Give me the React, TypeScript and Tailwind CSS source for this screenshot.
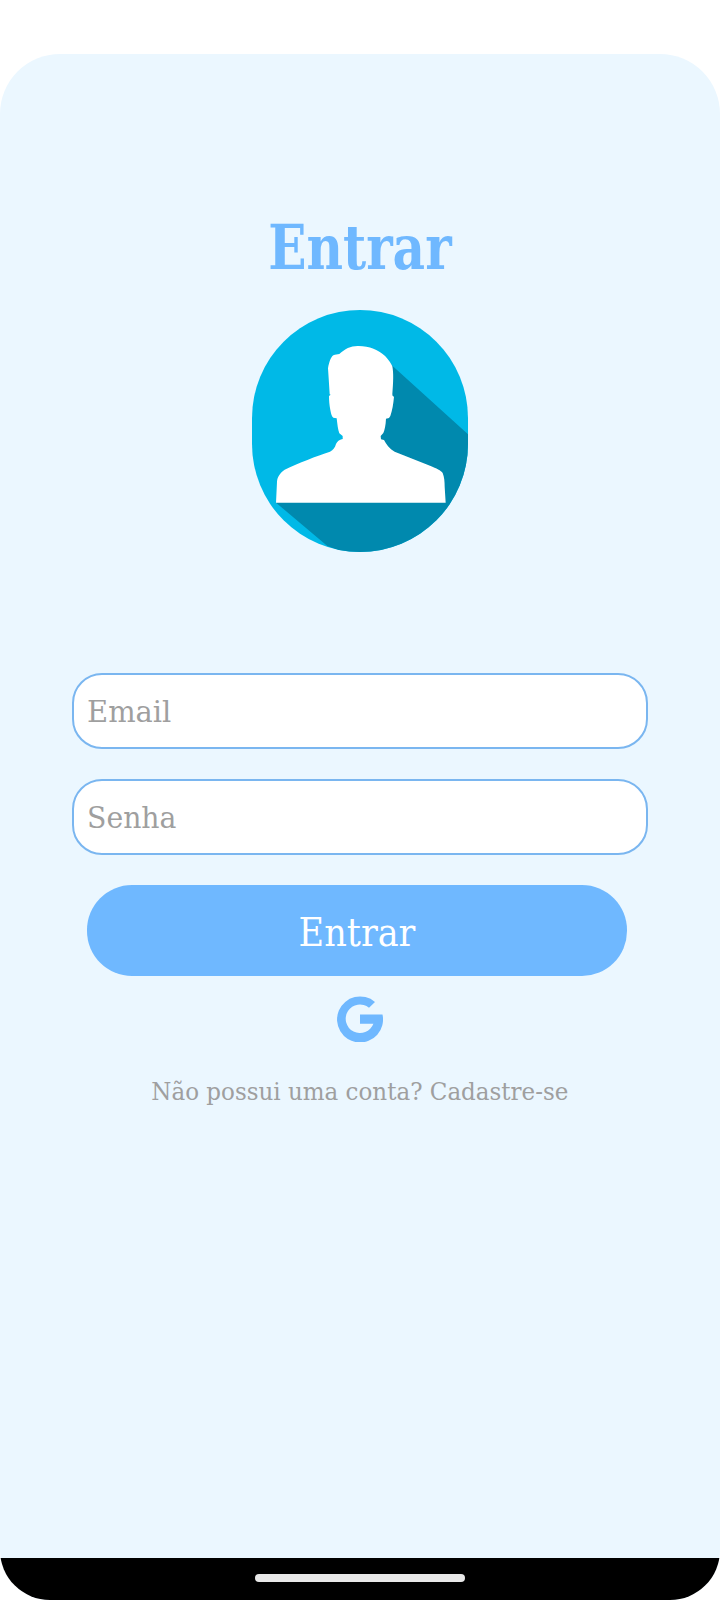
import React from "react";

function Avatar() {
  return (
    <svg viewBox="36 30 648 726" className="block h-[242px] w-[216px] rounded-[108px]">
      <rect x="36" y="30" width="648" height="726" fill="#00b9e7" />
      <path d="M440 180L457 197L684 403V756H310L262 738L108 608L300 430Z" fill="#0089ae" />
      <path
        d="M298 162C315 146 334 137 356 138C388 138 416 150 436 169C446 180 453 190 457 199C461 220 460 245 457 283L458 288L462 290C460 312 457 330 451 348L447 354L438 356C437 376 434 390 430 399L422 408L423 418L432 420C438 432 448 446 464 455L570 497C590 505 603 511 608 519C613 532 614 545 614 560L617 608H108L111 545C112 530 120 519 134 509C175 489 230 468 270 455C280 450 285 443 288 432C292 424 297 419 308 417V408L298 400C294 390 292 372 290 355L280 353C275 350 273 340 271 330C268 315 267 300 267 288L272 284L269 283L266 235L264 205C268 185 272 172 280 166C286 163 292 164 298 162Z"
        fill="#fff"
      />
    </svg>
  );
}

function GoogleMark() {
  return (
    <svg viewBox="0 0 46 46" className="block h-[46px] w-[46px]" fill="#6fb8ff">
      <path d="M38 6A23 23 0 1 0 45.5 18.5H23V27.8H36.4A14.3 14.3 0 1 1 32 11.7Z" />
    </svg>
  );
}

function Field({ label, type, stretch }: { label: string; type: string; stretch: string }) {
  return (
    <label className="flex h-[76px] w-[576px] items-center rounded-[30px] border-2 border-[#7ab6f0] bg-white pt-[2px] pl-[13px]">
      <span className={`origin-left text-[29px] leading-none text-[#9f9f9f] ${stretch}`}>{label}</span>
      <input type={type} aria-label={label} className="min-w-0 flex-1 bg-transparent outline-none" />
    </label>
  );
}

export default function App() {
  return (
    <div className="flex h-[1600px] w-[720px] flex-col bg-white pt-[54px] [font-family:'Roboto_Slab','DejaVu_Serif_Condensed','DejaVu_Serif',serif] [font-stretch:condensed]">
      <div className="flex flex-1 flex-col overflow-hidden rounded-t-[60px] rounded-b-[50px] bg-[#ebf7ff]">
        <main className="flex flex-1 flex-col items-center">
          <h1 className="mt-[159px] flex h-[70px] items-center whitespace-nowrap text-[62px] leading-none font-bold text-[#6fb8ff]">
            <span className="scale-x-[0.9]">Entrar</span>
          </h1>
          <div className="mt-[27px]">
            <Avatar />
          </div>
          <form className="mt-[121px] flex flex-col gap-[30px]">
            <Field label="Email" type="email" stretch="scale-x-[1.11]" />
            <Field label="Senha" type="password" stretch="scale-x-[1.085]" />
            <button
              type="button"
              className="ml-[15px] flex h-[91px] w-[540px] items-center justify-center rounded-[45px] bg-[#6fb8ff] pt-[3px] text-[39px] leading-none text-white"
            >
              <span>Entrar</span>
            </button>
          </form>
          <div className="mt-5">
            <GoogleMark />
          </div>
          <p className="mt-[34px] flex h-[30px] items-center whitespace-nowrap text-[25px] leading-none text-[#9f9f9f]">
            <span className="scale-x-[1.023]">Não possui uma conta? Cadastre-se</span>
          </p>
        </main>
        <nav className="flex h-[42px] justify-center bg-black pt-4">
          <div className="h-2 w-[210px] rounded-full bg-[#e8e8e8]" />
        </nav>
      </div>
    </div>
  );
}
